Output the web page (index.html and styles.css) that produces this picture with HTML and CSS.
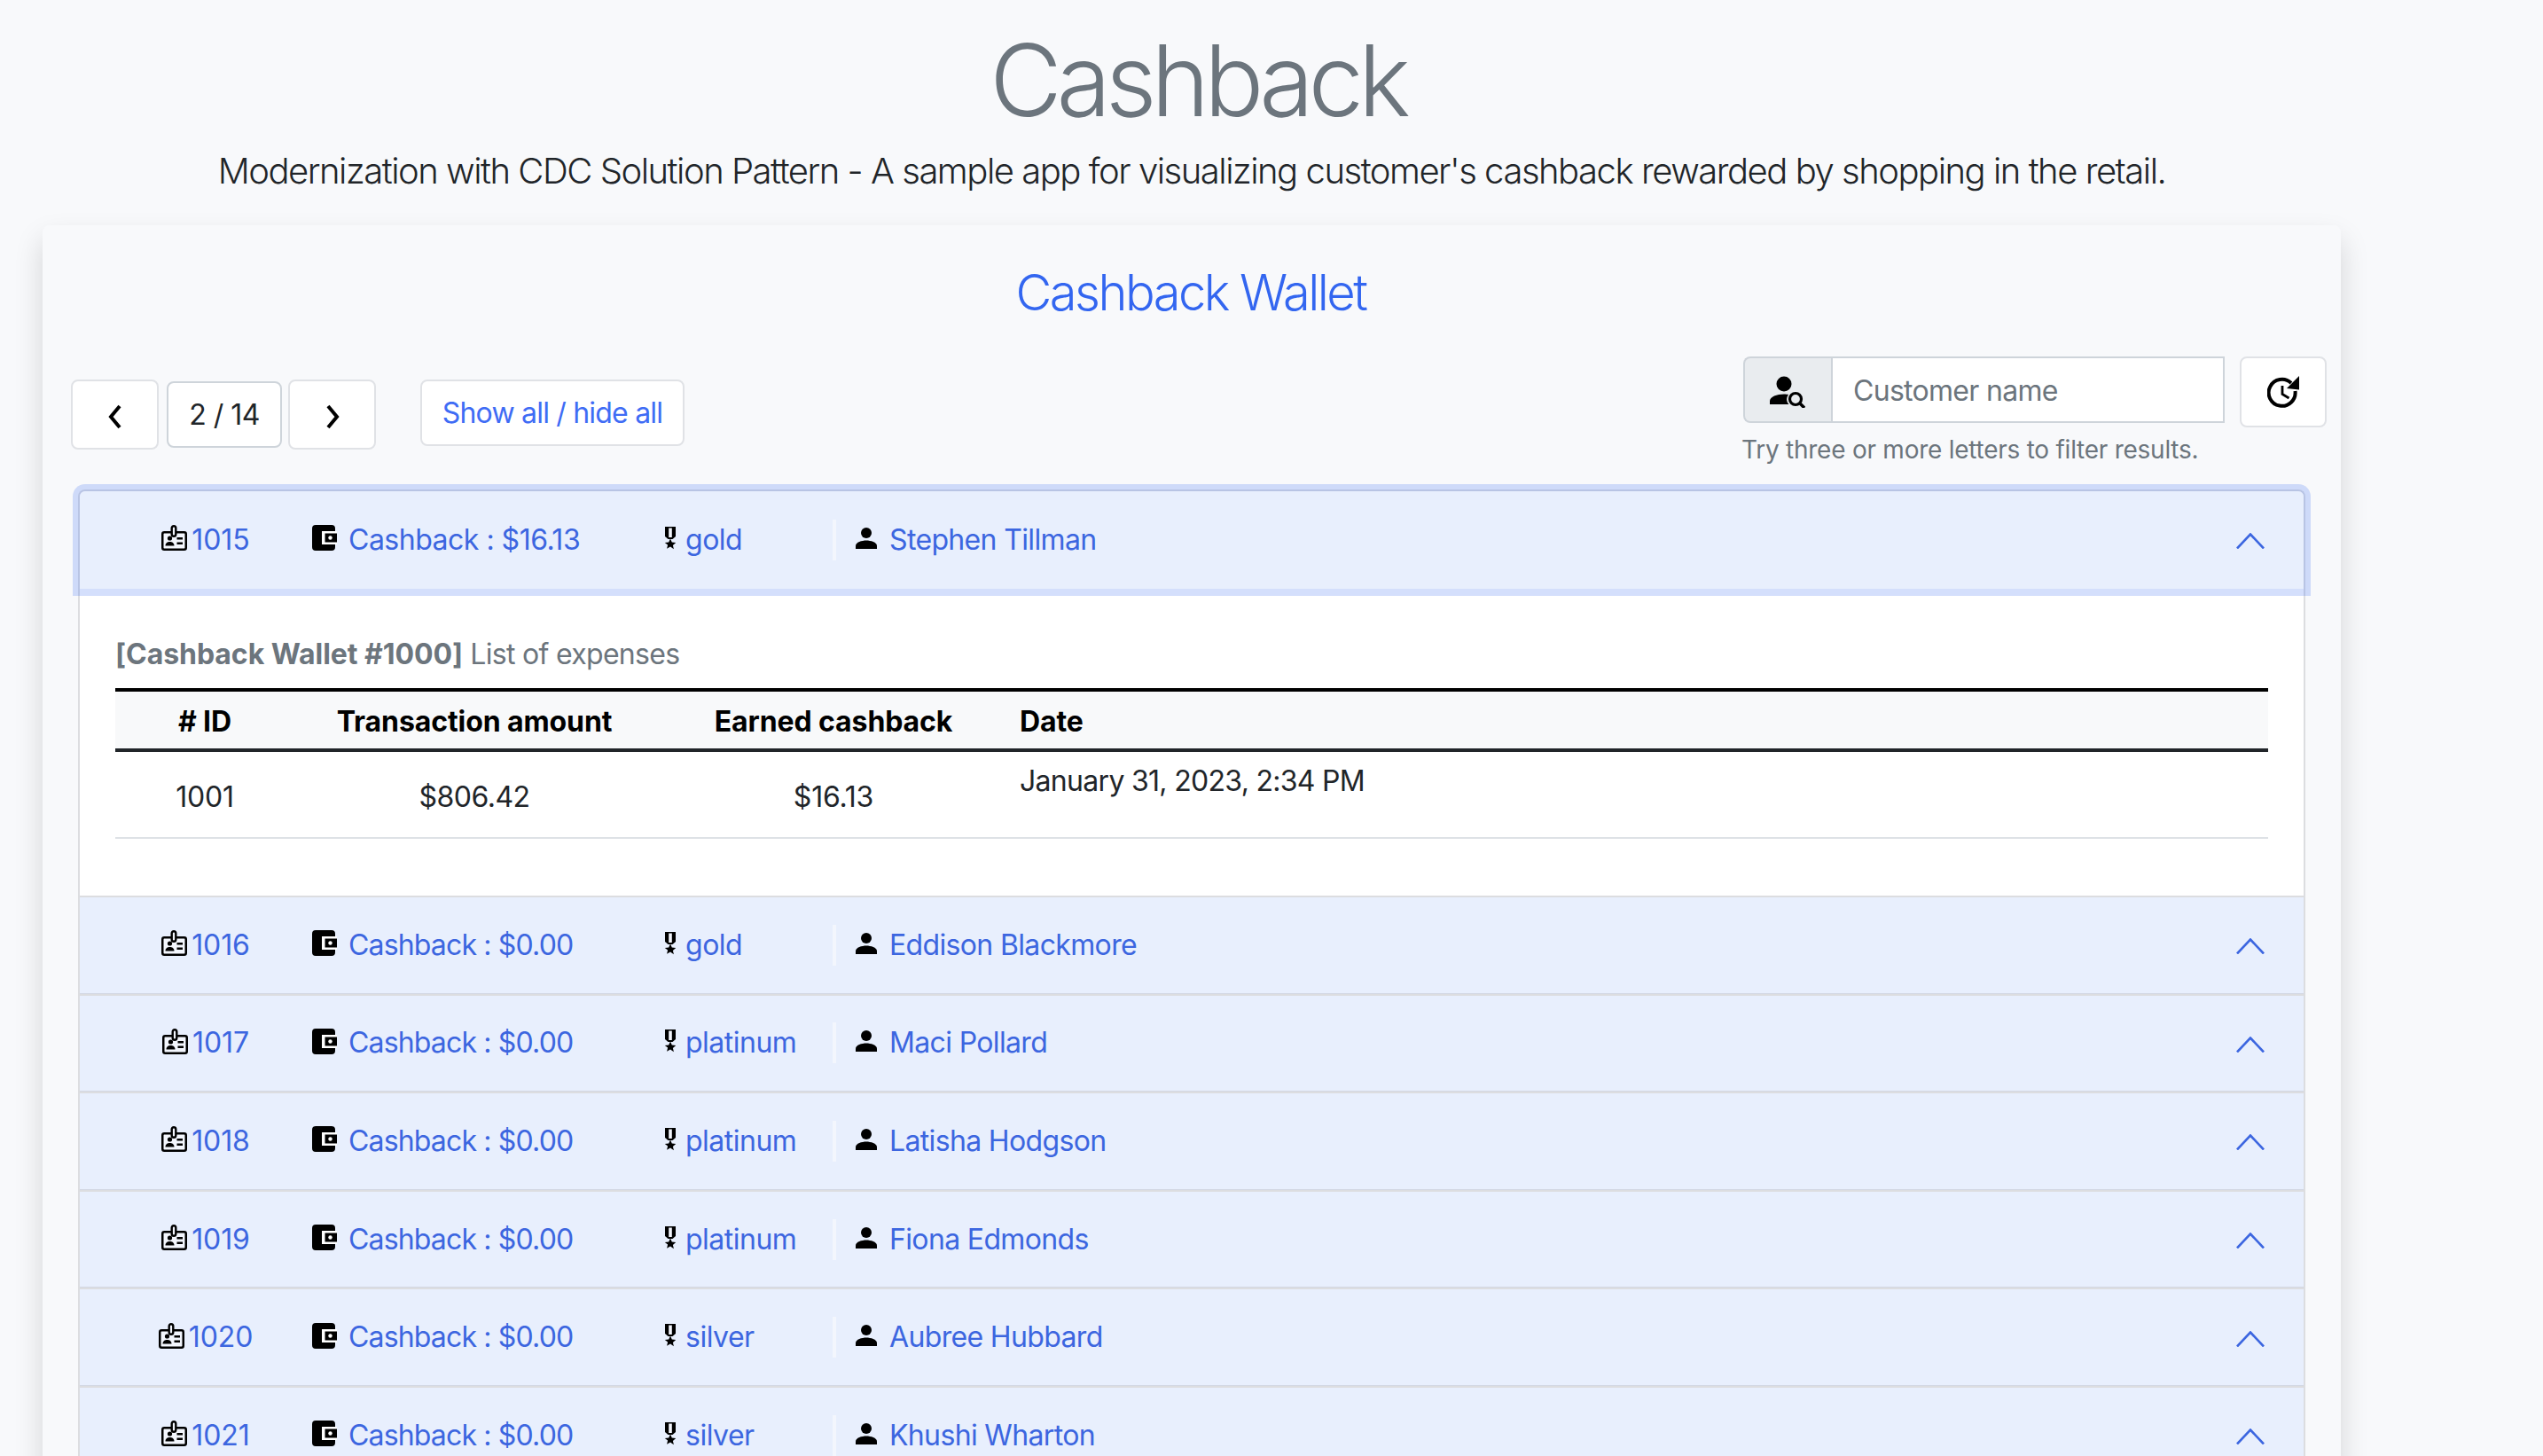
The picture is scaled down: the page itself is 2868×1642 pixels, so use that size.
FILE: index.html
```html
<!DOCTYPE html>
<html lang="en">
<head>
    <meta charset="UTF-8">
    <title>Cashback</title>
    <link rel="stylesheet" href="styles.css">
</head>
<body>

    <!-- Icons -->
    <svg class="icon-defs" xmlns="http://www.w3.org/2000/svg">
        <symbol id="i-badge" viewBox="0 0 29 29">
            <rect x="1.25" y="8.25" width="26.5" height="19.5" rx="2" fill="#f3f6fd" stroke="#000" stroke-width="2.5"/>
            <rect x="11.7" y="1.2" width="4.6" height="11.6" rx="2.3" fill="#f3f6fd" stroke="#000" stroke-width="2.4"/>
            <circle cx="9.5" cy="15" r="2.6"/>
            <path d="M4.5 23.5c0-3 2.5-4.4 5-4.4s5 1.4 5 4.4z"/>
            <path d="M17.5 14h6.5v2.4h-6.5zM17.5 19.5h6.5v2.4h-6.5z"/>
        </symbol>
        <symbol id="i-wallet" viewBox="0 0 28 29">
            <path d="M4 0h18a4 4 0 0 1 4 4v3H11v15h15v3a4 4 0 0 1-4 4H4a4 4 0 0 1-4-4V4a4 4 0 0 1 4-4z"/>
            <path d="M11 7h17v15H11z" fill="#fff"/>
            <path d="M14.500 9.500H28v10H14.500z"/>
            <circle cx="20.500" cy="14.500" r="2.200" fill="#fff"/>
        </symbol>
        <symbol id="i-medal" viewBox="0 0 14 26">
            <path d="M1 0h12v11l-3.500 3h-5L1 11z"/>
            <path d="M5.200 1.500h3.600v10.500H5.200z" fill="#f3f6fd"/>
            <path d="M7 13.500l1.800 4.100 4.400.400-3.300 2.900 1 4.300L7 22.500l-3.900 2.200 1-4.300L.8 18l4.400-.400z"/>
        </symbol>
        <symbol id="i-person" viewBox="0 0 24 24">
            <circle cx="12" cy="6" r="6"/>
            <path d="M0 24v-3.500C0 16.500 7 14.500 12 14.500s12 2 12 6V24z"/>
        </symbol>
        <symbol id="i-chevron" viewBox="0 0 32 18">
            <path d="M1 17.500 16 1.500l15 16" fill="none" stroke="currentColor" stroke-width="2.600"/>
        </symbol>
        <symbol id="i-user-search" viewBox="0 0 40 36">
            <circle cx="16" cy="9" r="8.500"/>
            <path d="M0 32v-4c0-4.500 8-7.500 16-7.500 2 0 4 .2 5 .5-2.500 3.500-2.500 8 .5 11H0z"/>
            <circle cx="29" cy="26" r="6.500" fill="none" stroke="#000" stroke-width="3.200"/>
            <path d="M33.500 30.500 39 36" fill="none" stroke="#000" stroke-width="3.400"/>
        </symbol>
        <symbol id="i-history" viewBox="0 0 36 36">
            <path d="M27 8A15 15 0 1 0 31.500 17" fill="none" stroke="#000" stroke-width="4"/>
            <path d="M36 0v15.500L22 14z"/>
            <path d="M17 11v9.500l7.500 4.500" fill="none" stroke="#000" stroke-width="2.800"/>
        </symbol>
    </svg>

    <div class="page">
        <!-- Title -->
        <h1 class="page-title">Cashback</h1>
        <p class="lead">Modernization with CDC Solution Pattern - A sample app for visualizing customer's cashback rewarded by shopping in the retail.</p>

        <!-- Wallet Card -->
        <section class="card">
            <h3 class="card-title">Cashback Wallet</h3>

            <div class="toolbar">
                <div class="pager">
                    <button class="btn btn-nav"><svg class="icon-nav" viewBox="0 0 16 30"><path d="M13 3 3 15l10 12" fill="none" stroke="#000" stroke-width="4"/></svg></button>
                    <input class="page-box" type="text" value="2 / 14">
                    <button class="btn btn-nav"><svg class="icon-nav" viewBox="0 0 16 30"><path d="M3 3l10 12L3 27" fill="none" stroke="#000" stroke-width="4"/></svg></button>
                    <button class="btn btn-show">Show all / hide all</button>
                </div>
                <div class="search">
                    <div class="search-row">
                        <div class="input-group">
                            <span class="addon"><svg class="icon-user-search"><use href="#i-user-search"/></svg></span>
                            <input class="search-input" type="text" placeholder="Customer name">
                        </div>
                        <button class="btn btn-refresh"><svg class="icon-history"><use href="#i-history"/></svg></button>
                    </div>
                    <small class="hint">Try three or more letters to filter results.</small>
                </div>
            </div>

            <!-- Accordion -->
            <div class="accordion">
                <div class="item item-open">
                    <div class="row-head">
                        <span class="cell-id"><svg class="icon-badge"><use href="#i-badge"/></svg>1015</span>
                        <span class="cell-wallet"><svg class="icon-wallet"><use href="#i-wallet"/></svg>Cashback : $16.13</span>
                        <span class="cell-tier"><svg class="icon-medal"><use href="#i-medal"/></svg>gold</span>
                        <span class="cell-name"><svg class="icon-person"><use href="#i-person"/></svg>Stephen Tillman</span>
                        <svg class="icon-chevron"><use href="#i-chevron"/></svg>
                    </div>
                    <div class="panel">
                        <p class="panel-title"><b>[Cashback Wallet #1000]</b> List of expenses</p>
                        <table class="expenses">
                            <thead>
                                <tr>
                                    <th class="col-id"># ID</th>
                                    <th class="col-amount">Transaction amount</th>
                                    <th class="col-earned">Earned cashback</th>
                                    <th class="col-date">Date</th>
                                </tr>
                            </thead>
                            <tbody>
                                <tr>
                                    <td class="col-id">1001</td>
                                    <td class="col-amount">$806.42</td>
                                    <td class="col-earned">$16.13</td>
                                    <td class="col-date">January 31, 2023, 2:34 PM</td>
                                </tr>
                            </tbody>
                        </table>
                    </div>
                </div>

                <div class="item">
                    <div class="row-head">
                        <span class="cell-id"><svg class="icon-badge"><use href="#i-badge"/></svg>1016</span>
                        <span class="cell-wallet"><svg class="icon-wallet"><use href="#i-wallet"/></svg>Cashback : $0.00</span>
                        <span class="cell-tier"><svg class="icon-medal"><use href="#i-medal"/></svg>gold</span>
                        <span class="cell-name"><svg class="icon-person"><use href="#i-person"/></svg>Eddison Blackmore</span>
                        <svg class="icon-chevron"><use href="#i-chevron"/></svg>
                    </div>
                </div>
                <div class="item">
                    <div class="row-head">
                        <span class="cell-id"><svg class="icon-badge"><use href="#i-badge"/></svg>1017</span>
                        <span class="cell-wallet"><svg class="icon-wallet"><use href="#i-wallet"/></svg>Cashback : $0.00</span>
                        <span class="cell-tier"><svg class="icon-medal"><use href="#i-medal"/></svg>platinum</span>
                        <span class="cell-name"><svg class="icon-person"><use href="#i-person"/></svg>Maci Pollard</span>
                        <svg class="icon-chevron"><use href="#i-chevron"/></svg>
                    </div>
                </div>
                <div class="item">
                    <div class="row-head">
                        <span class="cell-id"><svg class="icon-badge"><use href="#i-badge"/></svg>1018</span>
                        <span class="cell-wallet"><svg class="icon-wallet"><use href="#i-wallet"/></svg>Cashback : $0.00</span>
                        <span class="cell-tier"><svg class="icon-medal"><use href="#i-medal"/></svg>platinum</span>
                        <span class="cell-name"><svg class="icon-person"><use href="#i-person"/></svg>Latisha Hodgson</span>
                        <svg class="icon-chevron"><use href="#i-chevron"/></svg>
                    </div>
                </div>
                <div class="item">
                    <div class="row-head">
                        <span class="cell-id"><svg class="icon-badge"><use href="#i-badge"/></svg>1019</span>
                        <span class="cell-wallet"><svg class="icon-wallet"><use href="#i-wallet"/></svg>Cashback : $0.00</span>
                        <span class="cell-tier"><svg class="icon-medal"><use href="#i-medal"/></svg>platinum</span>
                        <span class="cell-name"><svg class="icon-person"><use href="#i-person"/></svg>Fiona Edmonds</span>
                        <svg class="icon-chevron"><use href="#i-chevron"/></svg>
                    </div>
                </div>
                <div class="item">
                    <div class="row-head">
                        <span class="cell-id"><svg class="icon-badge"><use href="#i-badge"/></svg>1020</span>
                        <span class="cell-wallet"><svg class="icon-wallet"><use href="#i-wallet"/></svg>Cashback : $0.00</span>
                        <span class="cell-tier"><svg class="icon-medal"><use href="#i-medal"/></svg>silver</span>
                        <span class="cell-name"><svg class="icon-person"><use href="#i-person"/></svg>Aubree Hubbard</span>
                        <svg class="icon-chevron"><use href="#i-chevron"/></svg>
                    </div>
                </div>
                <div class="item">
                    <div class="row-head">
                        <span class="cell-id"><svg class="icon-badge"><use href="#i-badge"/></svg>1021</span>
                        <span class="cell-wallet"><svg class="icon-wallet"><use href="#i-wallet"/></svg>Cashback : $0.00</span>
                        <span class="cell-tier"><svg class="icon-medal"><use href="#i-medal"/></svg>silver</span>
                        <span class="cell-name"><svg class="icon-person"><use href="#i-person"/></svg>Khushi Wharton</span>
                        <svg class="icon-chevron"><use href="#i-chevron"/></svg>
                    </div>
                </div>
            </div>
        </section>
    </div>

</body>
</html>
```

FILE: styles.css
```css
html {
    overflow: hidden;
}

body {
    margin: 0;
    font-family: Inter, "Liberation Sans", sans-serif;
    font-size: 32px;
    line-height: 48px;
    color: #212529;
    background-color: #f8f9fb;
}

.icon-defs {
    display: none;
}

.page {
    width: 2592px;
    padding: 30px 0 0 48px;
}

.page-title {
    margin: 0 0 13px;
    padding-left: 13px;
    font-size: 112px;
    line-height: 120px;
    font-weight: 300;
    letter-spacing: -6.3px;
    color: #6c757d;
    text-align: center;
}

.lead {
    margin: 0 0 31px;
    font-size: 40px;
    line-height: 60px;
    font-weight: 300;
    letter-spacing: -1.48px;
    text-align: center;
}

.card {
    padding: 42px 40px 0;
    border-radius: 8px;
    background-color: #f8f9fb;
    box-shadow: 0 16px 32px rgba(0, 0, 0, 0.15);
}

.card-title {
    margin: 0 0 38px;
    padding-right: 2px;
    font-size: 56px;
    line-height: 68px;
    font-weight: 300;
    letter-spacing: -2.5px;
    color: #3366f0;
    text-align: center;
}

.toolbar {
    display: flex;
    justify-content: space-between;
    align-items: flex-start;
    margin: 0 -24px 24px -8px;
}

.pager {
    display: flex;
    align-items: flex-start;
    padding-top: 26px;
}

.btn {
    padding: 0;
    border: 2px solid #e0e2e6;
    border-radius: 8px;
    background-color: #fff;
    font: inherit;
}

.btn-nav {
    display: flex;
    align-items: center;
    justify-content: center;
    width: 99px;
    height: 79px;
    padding-top: 4px;
}

.icon-nav {
    width: 16px;
    height: 30px;
}

.page-box {
    box-sizing: border-box;
    width: 130px;
    height: 75px;
    margin: 2px 7px 0 9px;
    padding: 0;
    border: 2px solid #ced4da;
    border-radius: 8px;
    background-color: #fff;
    font: inherit;
    letter-spacing: -0.5px;
    color: #212529;
    text-align: center;
}

.btn-show {
    width: 298px;
    height: 75px;
    margin-left: 50px;
    letter-spacing: -0.8px;
    color: #3f6cf5;
}

.search {
    width: 660px;
}

.search-row {
    display: flex;
    align-items: flex-start;
    margin-left: 2px;
}

.input-group {
    display: flex;
    width: 543px;
    height: 75px;
}

.addon {
    box-sizing: border-box;
    display: flex;
    align-items: center;
    justify-content: center;
    width: 99px;
    border: 2px solid #ced4da;
    border-right: none;
    border-radius: 8px 0 0 8px;
    background-color: #e9ecef;
}

.icon-user-search {
    width: 40px;
    height: 36px;
    margin: 4px 0 0 -2px;
}

.search-input {
    box-sizing: border-box;
    flex: 1;
    min-width: 0;
    padding: 2px 23px 0;
    border: 2px solid #ced4da;
    border-radius: 0;
    background-color: #fff;
    font: inherit;
    letter-spacing: -0.7px;
    outline: none;
}

.search-input::placeholder {
    color: #6c757d;
    opacity: 1;
}

.btn-refresh {
    display: flex;
    align-items: center;
    justify-content: center;
    width: 98px;
    height: 80px;
    margin-left: 17px;
}

.icon-history {
    width: 36px;
    height: 36px;
}

.hint {
    display: block;
    margin-top: 4px;
    font-size: 28px;
    line-height: 42px;
    letter-spacing: -0.25px;
    color: #6c757d;
}

/* accordion rows */
.accordion {
    letter-spacing: -0.5px;
    color: #3c66e0;
}

.item {
    box-sizing: border-box;
    height: 110.6px;
    border: 2px solid #dcdde0;
    border-bottom: none;
    background-color: #fff;
}

.item-open {
    height: auto;
    border-radius: 8px 8px 0 0;
}

.row-head {
    box-sizing: border-box;
    display: flex;
    align-items: center;
    height: 108.6px;
    padding: 0 44px 1px 54px;
    background-color: #e8effd;
    box-shadow: inset 0 -1px 0 #d3d8e4;
}

.item-open .row-head {
    position: relative;
    z-index: 1;
    height: 110px;
    border-radius: 6px 6px 0 0;
    box-shadow: 0 0 0 8px rgba(60, 110, 240, 0.22);
}

.row-head span {
    display: flex;
    align-items: center;
}

.row-head span svg {
    margin-bottom: 4px;
}

.cell-id {
    justify-content: center;
    width: 176px;
    letter-spacing: -0.1px;
}

.cell-wallet {
    width: 397px;
    margin-left: 32px;
    letter-spacing: -0.84px;
}

.item-open .cell-wallet {
    letter-spacing: -0.5px;
}

.cell-tier {
    width: 190px;
}

.cell-name {
    flex: 1;
    height: 46px;
    padding-left: 22px;
    border-left: 4px solid #f3f6fd;
    letter-spacing: -0.65px;
}

.icon-badge {
    width: 29px;
    height: 29px;
    margin-right: 5px;
    color: #000;
}

.icon-wallet {
    width: 28px;
    height: 29px;
    margin-right: 13px;
}

.icon-medal {
    width: 14px;
    height: 26px;
    margin-right: 10px;
}

.icon-person {
    width: 24px;
    height: 24px;
    margin-right: 14px;
}

.icon-chevron {
    width: 32px;
    height: 18px;
    margin-top: 3px;
}

.panel {
    padding: 50px 40px 64px;
    letter-spacing: -0.37px;
}

.panel-title {
    margin: 0 0 14px;
    letter-spacing: -0.7px;
    color: #6c757d;
}

.panel-title b {
    letter-spacing: -0.05px;
}

.expenses {
    width: 100%;
    table-layout: fixed;
    border-collapse: separate;
    border-spacing: 0;
}

.expenses th {
    height: 61px;
    padding: 3px 8px 0;
    border-top: 4px solid #000;
    border-bottom: 4px solid #212529;
    background-color: #f8f9fa;
    font-weight: 700;
    letter-spacing: -0.1px;
    color: #000;
}

.expenses td {
    height: 87px;
    padding: 5px 8px 0;
    border-bottom: 2px solid #dee2e6;
    letter-spacing: -0.2px;
    color: #212529;
}

.col-id {
    width: 186px;
    text-align: center;
}

.col-amount {
    width: 390px;
    text-align: center;
}

.expenses td.col-amount {
    letter-spacing: -0.5px;
}

.col-earned {
    width: 388px;
    text-align: center;
}

.expenses .col-date {
    text-align: left;
}

.expenses td.col-date {
    vertical-align: top;
    padding-top: 9px;
    letter-spacing: -0.7px;
}
```
